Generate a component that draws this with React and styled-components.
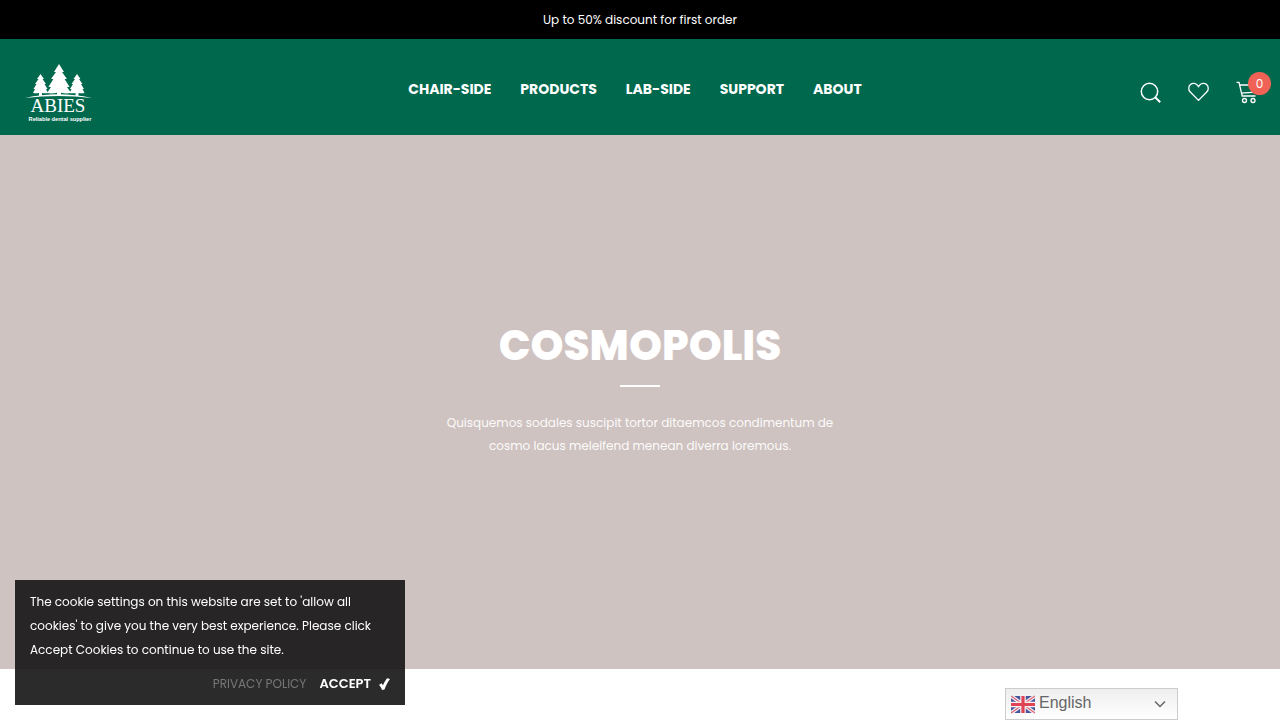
import React, { useState } from 'react'
import styled, { createGlobalStyle } from 'styled-components'

const GlobalStyle = createGlobalStyle`
    * {
        box-sizing: border-box;
    }
    body {
        margin: 0;
        background-color: #fff;
        font-family: Poppins, Inter, sans-serif;
        font-size: 12px;
    }
`
const TopBar = styled.div`
    padding: 8px 16px;
    background-color: #000;
    color: #fff;
    text-align: center;
    line-height: 23px;
`
const Header = styled.header`
    display: grid;
    grid-template-columns: 1fr auto 1fr;
    align-items: center;
    padding: 10px 22px 10px 20px;
    background-color: #00684d;
    color: #fff;
`
const LogoLink = styled.a`
    display: block;
    width: 76px;
    height: 76px;
    color: #fff;
    svg {
        display: block;
    }
`
const Menu = styled.nav`
    display: flex;
    flex-wrap: wrap;
    gap: 29px;
    padding: 4px 8px 0 0;
    line-height: 24px;
`
const MenuLink = styled.a`
    color: #fff;
    font-size: 14px;
    font-weight: 700;
    text-decoration: none;
    text-transform: uppercase;
    &:hover {
        text-decoration: underline;
    }
`
const Actions = styled.div`
    display: flex;
    justify-content: flex-end;
    align-items: center;
    gap: 26px;
    padding-top: 12px;
`
const IconButton = styled.button`
    position: relative;
    display: flex;
    padding: 0;
    border: 0;
    background: none;
    color: #fff;
    cursor: pointer;
`
const Badge = styled.span`
    position: absolute;
    top: -9px;
    right: -13px;
    width: 23px;
    height: 23px;
    border-radius: 50%;
    background-color: #f06255;
    text-align: center;
    font-size: 12px;
    font-family: Poppins, Inter, sans-serif;
    line-height: 23px;
`
const Hero = styled.section`
    display: flex;
    flex-direction: column;
    align-items: center;
    padding: 181px 20px 212px;
    background-color: #cfc3c1;
    color: #fff;
    text-align: center;
`
const HeroTitle = styled.h1`
    margin: 0;
    font-size: 42px;
    font-weight: 800;
    line-height: 60px;
    text-transform: uppercase;
`
const HeroLine = styled.hr`
    width: 40px;
    height: 2px;
    margin: 9px 0 24px;
    border: 0;
    background-color: #fff;
`
const HeroText = styled.p`
    max-width: 400px;
    margin: 0;
    color: rgba(255, 255, 255, 0.95);
    font-size: 12px;
    line-height: 23px;
`
const Cookie = styled.div`
    position: fixed;
    left: 15px;
    bottom: 15px;
    width: 390px;
    max-width: calc(100vw - 30px);
    padding: 10px 15px 9px;
    background-color: rgba(20, 20, 20, 0.9);
    color: #fff;
`
const CookieText = styled.p`
    margin: 0 0 10px;
    line-height: 24px;
`
const CookieActions = styled.div`
    display: flex;
    justify-content: flex-end;
    align-items: center;
    gap: 13px;
    line-height: 24px;
`
const PolicyLink = styled.a`
    color: #777;
    text-decoration: none;
    text-transform: uppercase;
`
const AcceptButton = styled.button`
    display: flex;
    align-items: center;
    gap: 8px;
    padding: 0;
    border: 0;
    background: none;
    color: #fff;
    font-family: inherit;
    font-size: 13px;
    font-weight: 600;
    line-height: 24px;
    text-transform: uppercase;
    cursor: pointer;
`
const Language = styled.label`
    position: fixed;
    right: 102px;
    bottom: 0;
    display: flex;
    align-items: center;
    width: 173px;
    height: 32px;
    padding: 0 11px 0 5px;
    border: 1px solid #ccc;
    background: linear-gradient(#eee, #fff);
    color: #666;
`
const LanguageSelect = styled.select`
    flex: 1;
    padding: 0 0 3px 4px;
    border: 0;
    background: none;
    color: #666;
    font-family: "Liberation Sans", Arial, sans-serif;
    font-size: 16px;
    line-height: 20px;
    appearance: none;
    cursor: pointer;
`

const links = ['Chair-side', 'Products', 'Lab-side', 'Support', 'About']

const Logo = () => (
    <svg width="76" height="76" viewBox="0 0 76 76" fill="currentColor">
        <path d="M39 15l5 8h-2l5 7h-2.400l5 8h-2.600l4 6c-4 .8-7 .3-10-.2v3h-4v-3c-3 .5-6 1-10 .2l4-6h-2.600l5-8H31l5-7h-2z" />
        <path d="M20.500 25l3.500 5h-1.500l3.500 5h-1.500l3 5h-1.500l2 4c-2 .5-4 .3-6 0v3h-3v-3c-2 .3-4 .5-6 0l2-4h-1.500l3-5H15l3.500-5H17z" />
        <path d="M57 25l3.500 5H59l3.500 5H61l3 5h-1.500l2 4c-2 .5-4 .3-6 0v3h-3v-3c-2 .3-4 .5-6 0l2-4H50l3-5h-1.500l3.500-5h-1.500z" />
        <path d="M5 49Q38 41.500 72 49Q38 44.800 5 49z" />
        <text x="38" y="63" textAnchor="middle" fontFamily="Liberation Serif, serif" fontSize="19">ABIES</text>
        <text x="40" y="72" textAnchor="middle" fontFamily="Liberation Sans, sans-serif" fontSize="5.600" fontWeight="700">Reliable dental supplier</text>
    </svg>
)

const SearchIcon = () => (
    <svg width="22" height="22" viewBox="0 0 22 22" fill="none" stroke="currentColor" strokeWidth="1.500">
        <circle cx="9.500" cy="9.500" r="8.200" />
        <path d="M15.200 15.200l5 5" strokeWidth="2" />
    </svg>
)

const HeartIcon = () => (
    <svg width="22" height="22" viewBox="0 0 22 22" fill="none" stroke="currentColor" strokeWidth="1.300">
        <path d="M10.500 18.400L2.300 10C.1 7.700.3 4.500 2.400 2.600c2.200-1.900 5.500-1.500 7.200.8L10.500 4.700l.9-1.300c1.700-2.300 5-2.700 7.200-.8 2.100 1.900 2.300 5.100.1 7.400z" />
    </svg>
)

const CartIcon = () => (
    <svg width="22" height="24" viewBox="0 0 22 24" fill="none" stroke="currentColor" strokeWidth="1.300">
        <path d="M.5 1.300h2.500l3.200 13.700h13.300" />
        <path d="M3.600 4h17l-1.700 7.200L5.300 12.200" />
        <circle cx="8.500" cy="19.500" r="2" />
        <circle cx="17" cy="19.500" r="2" />
    </svg>
)

const Flag = () => (
    <svg width="24" height="24" viewBox="0 0 24 24">
        <path d="M0 4h24v17H0z" fill="#4a549c" />
        <path d="M0 4l24 17M24 4L0 21" stroke="#f2edf1" strokeWidth="3.600" />
        <path d="M0 4l24 17M24 4L0 21" stroke="#df6673" strokeWidth="1.200" />
        <path d="M12 4v17M0 12.500h24" stroke="#f7f1f3" strokeWidth="5.600" />
        <path d="M12 4v17M0 12.500h24" stroke="#df4455" strokeWidth="3.200" />
    </svg>
)

const App = () => {
    const [accepted, setAccepted] = useState(false)
    const [language, setLanguage] = useState('en')

    return (
        <>
            <GlobalStyle />
            <TopBar>Up to 50% discount for first order</TopBar>
            <Header>
                <LogoLink href="#home" aria-label="Abies">
                    <Logo />
                </LogoLink>
                <Menu>
                    {links.map((link) => (
                        <MenuLink key={link} href={`#${link.toLowerCase()}`}>{link}</MenuLink>
                    ))}
                </Menu>
                <Actions>
                    <IconButton aria-label="Search"><SearchIcon /></IconButton>
                    <IconButton aria-label="Wish list"><HeartIcon /></IconButton>
                    <IconButton aria-label="Cart">
                        <CartIcon />
                        <Badge>0</Badge>
                    </IconButton>
                </Actions>
            </Header>
            <Hero>
                <HeroTitle>Cosmopolis</HeroTitle>
                <HeroLine />
                <HeroText>
                    Quisquemos sodales suscipit tortor ditaemcos condimentum de cosmo lacus meleifend menean diverra loremous.
                </HeroText>
            </Hero>
            {!accepted && (
                <Cookie>
                    <CookieText>
                        The cookie settings on this website are set to 'allow all cookies' to give you the very best experience. Please click Accept Cookies to continue to use the site.
                    </CookieText>
                    <CookieActions>
                        <PolicyLink href="#privacy">Privacy Policy</PolicyLink>
                        <AcceptButton onClick={() => setAccepted(true)}>
                            Accept
                            <svg width="11" height="12" viewBox="0 0 11 12" fill="currentColor">
                                <path d="M0 7l2.500-1.800L4 7.200C5.300 4.200 6.800 1.800 8.200.3L11 .9C8.900 3.700 7 7.300 5.500 11.400L3 12C2.300 10 1.400 8.300 0 7z" />
                            </svg>
                        </AcceptButton>
                    </CookieActions>
                </Cookie>
            )}
            <Language>
                <Flag />
                <LanguageSelect aria-label="Language" value={language} onChange={(e) => setLanguage(e.target.value)}>
                    <option value="en">English</option>
                    <option value="fr">French</option>
                    <option value="de">German</option>
                </LanguageSelect>
                <svg width="12" height="8" viewBox="0 0 12 8" fill="none" stroke="currentColor" strokeWidth="1.500">
                    <path d="M1 1.500l5 5 5-5" />
                </svg>
            </Language>
        </>
    )
}

export default App
